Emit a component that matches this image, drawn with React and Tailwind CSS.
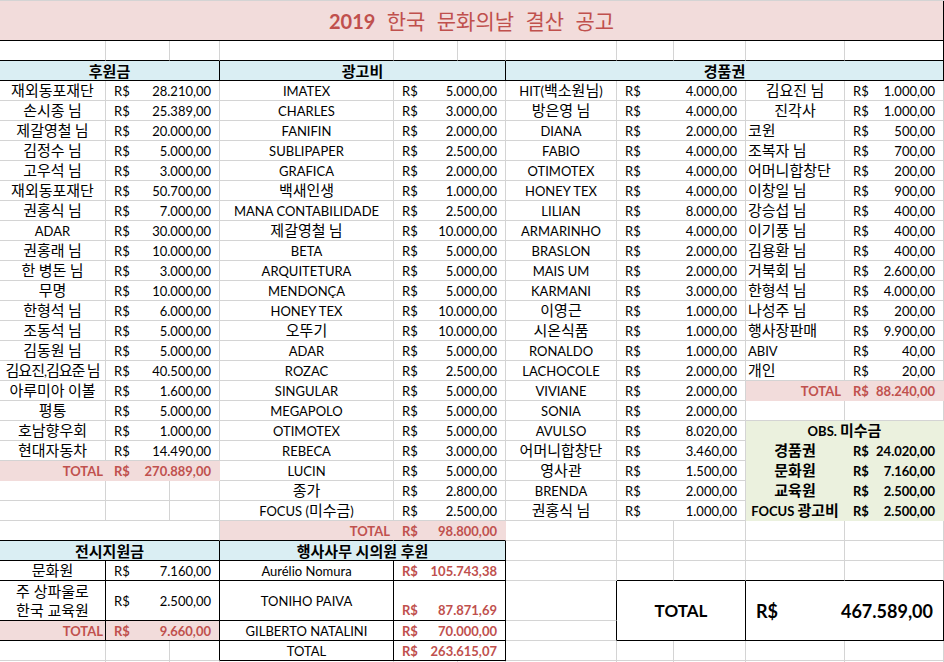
import React from "react";

const COLS = "106px 64px 50px 174px 64px 48px 111px 57px 72px 99px 99px";
const ROWS = "40px repeat(27, 20px) 40px 20px 20px 20px";
const NROWS = 32;
const NCOLS = 11;

const PINK = "bg-[#f2dcdb]";
const BLUE = "bg-[#daeef3]";
const GREEN = "bg-[#ebf1de]";

const range = (a, b) => Array.from({ length: b - a + 1 }, (_, i) => a + i);

// black lines: after column -> rows, after row -> columns
const VBLACK = {
  1: [28, 29, 30],
  3: [3, 27, 28, 29, 30, 31],
  4: [28, 29, 30, 31],
  6: [3, 27, 28, 29, 30, 31],
  7: [29, 30],
  9: [29, 30],
  11: [1, 2, 3, 29, 30],
};
const HBLACK = {
  1: range(1, 11),
  2: range(1, 11),
  3: range(1, 11),
  26: range(1, 6),
  27: range(1, 6),
  28: [...range(1, 6), ...range(8, 11)],
  29: range(1, 6),
  30: [...range(1, 6), ...range(8, 11)],
  31: range(4, 6),
};

const HANGUL = /([\uac00-\ud7a3]+)/;

// hangul runs are set a bit larger than latin, like the sheet's mixed fonts
const Nm = ({ t, className = "" }) => (
  <span className={`text-[13px] ${className}`}>
    {t.split(HANGUL).map((part, i) =>
      HANGUL.test(part) ? (
        <span key={i} className="text-[15px]">{part}</span>
      ) : (
        part
      )
    )}
  </span>
);

const Acc = ({ v, className = "" }) => (
  <div className={`flex w-full justify-between px-[8px] ${className}`}>
    <span>R$</span>
    <span>{v}</span>
  </div>
);

const huwon = [
  ["재외동포재단", "28.210,00"],
  ["손시종 님", "25.389,00"],
  ["제갈영철 님", "20.000,00"],
  ["김정수 님", "5.000,00"],
  ["고우석 님", "3.000,00"],
  ["재외동포재단", "50.700,00"],
  ["권홍식 님", "7.000,00"],
  ["ADAR", "30.000,00"],
  ["권홍래 님", "10.000,00"],
  ["한 병돈 님", "3.000,00"],
  ["무명", "10.000,00"],
  ["한형석 님", "6.000,00"],
  ["조동석 님", "5.000,00"],
  ["김동원 님", "5.000,00"],
  ["김요진,김요준 님", "40.500,00"],
  ["아루미아 이볼", "1.600,00"],
  ["평통", "5.000,00"],
  ["호남향우회", "1.000,00"],
  ["현대자동차", "14.490,00"],
];

const gwanggo = [
  ["IMATEX", "5.000,00"],
  ["CHARLES", "3.000,00"],
  ["FANIFIN", "2.000,00"],
  ["SUBLIPAPER", "2.500,00"],
  ["GRAFICA", "2.000,00"],
  ["백새인생", "1.000,00"],
  ["MANA CONTABILIDADE", "2.500,00"],
  ["제갈영철 님", "10.000,00"],
  ["BETA", "5.000,00"],
  ["ARQUITETURA", "5.000,00"],
  ["MENDONÇA", "5.000,00"],
  ["HONEY TEX", "10.000,00"],
  ["오뚜기", "10.000,00"],
  ["ADAR", "5.000,00"],
  ["ROZAC", "2.500,00"],
  ["SINGULAR", "5.000,00"],
  ["MEGAPOLO", "5.000,00"],
  ["OTIMOTEX", "5.000,00"],
  ["REBECA", "3.000,00"],
  ["LUCIN", "5.000,00"],
  ["종가", "2.800,00"],
  ["FOCUS (미수금)", "2.500,00"],
];

const gyeongpumA = [
  ["HIT(백소원님)", "4.000,00"],
  ["방은영 님", "4.000,00"],
  ["DIANA", "2.000,00"],
  ["FABIO", "4.000,00"],
  ["OTIMOTEX", "4.000,00"],
  ["HONEY TEX", "4.000,00"],
  ["LILIAN", "8.000,00"],
  ["ARMARINHO", "4.000,00"],
  ["BRASLON", "2.000,00"],
  ["MAIS UM", "2.000,00"],
  ["KARMANI", "3.000,00"],
  ["이영근", "1.000,00"],
  ["시온식품", "1.000,00"],
  ["RONALDO", "1.000,00"],
  ["LACHOCOLE", "2.000,00"],
  ["VIVIANE", "2.000,00"],
  ["SONIA", "2.000,00"],
  ["AVULSO", "8.020,00"],
  ["어머니합창단", "3.460,00"],
  ["영사관", "1.500,00"],
  ["BRENDA", "2.000,00"],
  ["권홍식 님", "1.000,00"],
];

const gyeongpumB = [
  ["김요진 님", "1.000,00", true],
  ["진각사", "1.000,00", true],
  ["코윈", "500,00"],
  ["조복자 님", "700,00"],
  ["어머니합창단", "200,00"],
  ["이창일 님", "900,00"],
  ["강승섭 님", "400,00"],
  ["이기풍 님", "400,00"],
  ["김용환 님", "400,00"],
  ["거북회 님", "2.600,00"],
  ["한형석 님", "4.000,00"],
  ["나성주 님", "200,00"],
  ["행사장판매", "9.900,00"],
  ["ABIV", "40,00"],
  ["개인", "20,00"],
];

const obs = [
  ["경품권", "24.020,00"],
  ["문화원", "7.160,00"],
  ["교육원", "2.500,00"],
  ["FOCUS 광고비", "2.500,00"],
];

const redTotal = "text-[13px] font-bold text-[#c0504d]";

function buildCells() {
  const cells = [];
  const add = (c) => cells.push(c);

  add({
    r: 1, c: 1, cs: 11, fill: PINK, cls: "justify-center",
    content: (
      <span className="text-[21px] text-[#c0504d] [word-spacing:6px]">
        <span className="font-bold text-[20px]">2019</span> 한국 문화의날 결산 공고
      </span>
    ),
  });

  add({ r: 3, c: 1, cs: 3, fill: BLUE, cls: "justify-center", content: <span className="text-[15px] font-bold">후원금</span> });
  add({ r: 3, c: 4, cs: 3, fill: BLUE, cls: "justify-center", content: <span className="text-[15px] font-bold">광고비</span> });
  add({ r: 3, c: 7, cs: 5, fill: BLUE, cls: "justify-center", content: <span className="text-[15px] font-bold">경품권</span> });

  huwon.forEach(([n, v], i) => {
    add({
      r: 4 + i, c: 1, cls: "justify-center",
      content: <Nm t={n} className={n.length > 8 ? "tracking-[-1px]" : ""} />,
    });
    add({ r: 4 + i, c: 2, cs: 2, content: <Acc v={v} className="text-[13px]" /> });
  });
  add({ r: 23, c: 1, fill: PINK, cls: "justify-end pr-[2px]", content: <span className={redTotal}>TOTAL</span> });
  add({ r: 23, c: 2, cs: 2, fill: PINK, content: <Acc v="270.889,00" className={redTotal} /> });
  add({ r: 26, c: 1, cs: 3, content: null });

  gwanggo.forEach(([n, v], i) => {
    add({ r: 4 + i, c: 4, cls: "justify-center", content: <Nm t={n} /> });
    add({ r: 4 + i, c: 5, cs: 2, content: <Acc v={v} className="text-[13px]" /> });
  });
  add({ r: 26, c: 4, fill: PINK, cls: "justify-end pr-[3px]", content: <span className={redTotal}>TOTAL</span> });
  add({ r: 26, c: 5, cs: 2, fill: PINK, content: <Acc v="98.800,00" className={redTotal} /> });

  gyeongpumA.forEach(([n, v], i) => {
    add({ r: 4 + i, c: 7, cls: "justify-center", content: <Nm t={n} /> });
    add({ r: 4 + i, c: 8, cs: 2, content: <Acc v={v} className="text-[13px]" /> });
  });

  gyeongpumB.forEach(([n, v, center], i) => {
    add({ r: 4 + i, c: 10, cls: center ? "justify-center" : "justify-start pl-[2px]", content: <Nm t={n} /> });
    add({ r: 4 + i, c: 11, content: <Acc v={v} className="text-[13px]" /> });
  });
  add({ r: 19, c: 10, fill: PINK, cls: "justify-end pr-[3px]", content: <span className={redTotal}>TOTAL</span> });
  add({ r: 19, c: 11, fill: PINK, content: <Acc v="88.240,00" className={redTotal} /> });

  add({
    r: 21, c: 10, cs: 2, fill: GREEN, cls: "justify-center",
    content: <Nm t="OBS. 미수금" className="font-bold" />,
  });
  obs.forEach(([n, v], i) => {
    add({
      r: 22 + i, c: 10, fill: GREEN, cls: "justify-center",
      content: <Nm t={n} className="font-bold" />,
    });
    add({ r: 22 + i, c: 11, fill: GREEN, content: <Acc v={v} className="text-[13px] font-bold" /> });
  });

  // bottom tables
  add({ r: 27, c: 1, cs: 3, fill: BLUE, cls: "justify-center", content: <span className="text-[15px] font-bold">전시지원금</span> });
  add({ r: 27, c: 4, cs: 3, fill: BLUE, cls: "justify-center", content: <span className="text-[15px] font-bold">행사사무 시의원 후원</span> });

  add({ r: 28, c: 1, cls: "justify-center", content: <Nm t="문화원" /> });
  add({ r: 28, c: 2, cs: 2, content: <Acc v="7.160,00" className="text-[13px]" /> });
  add({
    r: 29, c: 1, cls: "justify-center",
    content: (
      <span className="text-[15px] leading-[19px] text-center">
        주 상파울로
        <br />
        한국 교육원
      </span>
    ),
  });
  add({ r: 29, c: 2, cs: 2, content: <Acc v="2.500,00" className="text-[13px]" /> });
  add({ r: 30, c: 1, fill: PINK, cls: "justify-end pr-[2px]", content: <span className={redTotal}>TOTAL</span> });
  add({ r: 30, c: 2, cs: 2, fill: PINK, content: <Acc v="9.660,00" className={redTotal} /> });

  add({ r: 28, c: 4, cls: "justify-center", content: <Nm t="Aurélio Nomura" /> });
  add({ r: 28, c: 5, cs: 2, content: <Acc v="105.743,38" className={redTotal} /> });
  add({ r: 29, c: 4, cls: "justify-center", content: <Nm t="TONIHO PAIVA" /> });
  add({ r: 29, c: 5, cs: 2, cls: "items-end pb-[1px]", content: <Acc v="87.871,69" className={redTotal} /> });
  add({ r: 30, c: 4, cls: "justify-center", content: <Nm t="GILBERTO NATALINI" /> });
  add({ r: 30, c: 5, cs: 2, content: <Acc v="70.000,00" className={redTotal} /> });
  add({ r: 31, c: 4, cls: "justify-center", content: <Nm t="TOTAL" /> });
  add({ r: 31, c: 5, cs: 2, content: <Acc v="263.615,07" className={redTotal} /> });

  add({ r: 29, rs: 2, c: 8, cs: 2, cls: "justify-center", content: <span className="text-[17px] font-bold">TOTAL</span> });
  add({
    r: 29, rs: 2, c: 10, cs: 2,
    content: <Acc v="467.589,00" className="text-[18px] font-bold px-[10px]" />,
  });

  // fill remaining grid with empty cells
  const taken = Array.from({ length: NROWS + 1 }, () => Array(NCOLS + 1).fill(false));
  cells.forEach(({ r, c, rs = 1, cs = 1 }) => {
    for (let i = r; i < r + rs; i++) for (let j = c; j < c + cs; j++) taken[i][j] = true;
  });
  for (let i = 1; i <= NROWS; i++)
    for (let j = 1; j <= NCOLS; j++) if (!taken[i][j]) cells.push({ r: i, c: j, content: null });

  return cells;
}

const Cell = ({ cell }) => {
  const { r, c, rs = 1, cs = 1, fill = "bg-white", content, cls = "" } = cell;
  const filled = fill !== "bg-white";
  const vb = (VBLACK[c + cs - 1] || []).some((x) => x >= r && x < r + rs);
  const hb = (HBLACK[r + rs - 1] || []).some((x) => x >= c && x < c + cs);
  const rb = vb ? "border-r-black" : filled ? "border-r-transparent" : "border-r-[#d4d4d4]";
  const bb = hb ? "border-b-black" : filled ? "border-b-transparent" : "border-b-[#d4d4d4]";
  return (
    <div
      className={`flex items-center whitespace-nowrap border-r border-b ${rb} ${bb} ${fill} ${cls}`}
      style={{ gridRow: `${r} / span ${rs}`, gridColumn: `${c} / span ${cs}` }}
    >
      {content}
    </div>
  );
};

export default function App() {
  const cells = buildCells();
  return (
    <div className="w-[944px] h-[662px] overflow-hidden bg-white text-black font-['Lato','Noto_Sans_CJK_KR',sans-serif] leading-[18px]">
      <div
        className="grid border-t border-[#d4d4d4]"
        style={{ gridTemplateColumns: COLS, gridTemplateRows: ROWS }}
      >
        {cells.map((cell) => (
          <Cell key={`${cell.r}-${cell.c}`} cell={cell} />
        ))}
      </div>
    </div>
  );
}
